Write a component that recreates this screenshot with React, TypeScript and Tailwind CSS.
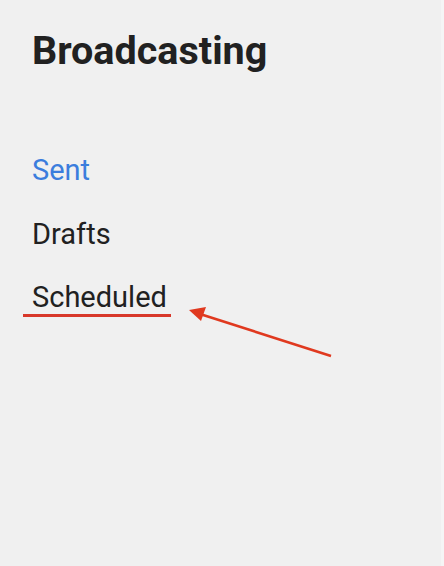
const items = [
  { label: "Sent", active: true },
  { label: "Drafts", active: false },
  { label: "Scheduled", active: false },
];

export default function App() {
  return (
    <div
      className="relative h-[566px] w-[444px] overflow-hidden bg-[#f0f0f0] pl-[32px] pt-[31px]"
      style={{ fontFamily: "Roboto, 'Noto Sans', sans-serif" }}
    >
      <h1 className="text-[39.5px] font-bold leading-[40px] text-[#212121]">
        Broadcasting
      </h1>
      <nav className="mt-[68px] flex flex-col">
        {items.map((item) => (
          <a
            key={item.label}
            className={`text-[29px] leading-[63.5px] ${
              item.active ? "text-[#3b7ddd]" : "text-[#212121]"
            }`}
          >
            {item.label}
          </a>
        ))}
      </nav>

      {/* right edge divider */}
      <div className="absolute right-0 top-0 h-full w-[3px] bg-[#f5f5f5]" />

      {/* annotation: underline + arrow */}
      <svg
        className="pointer-events-none absolute left-0 top-0"
        width="444"
        height="566"
        viewBox="0 0 444 566"
      >
        <rect x="23" y="314" width="148" height="3" fill="#d8382a" />
        <line
          x1="331"
          y1="356"
          x2="200"
          y2="314"
          stroke="#e0391f"
          strokeWidth="2.6"
        />
        <polygon points="189,310 206,307 201,321" fill="#e0391f" />
      </svg>
    </div>
  );
}
